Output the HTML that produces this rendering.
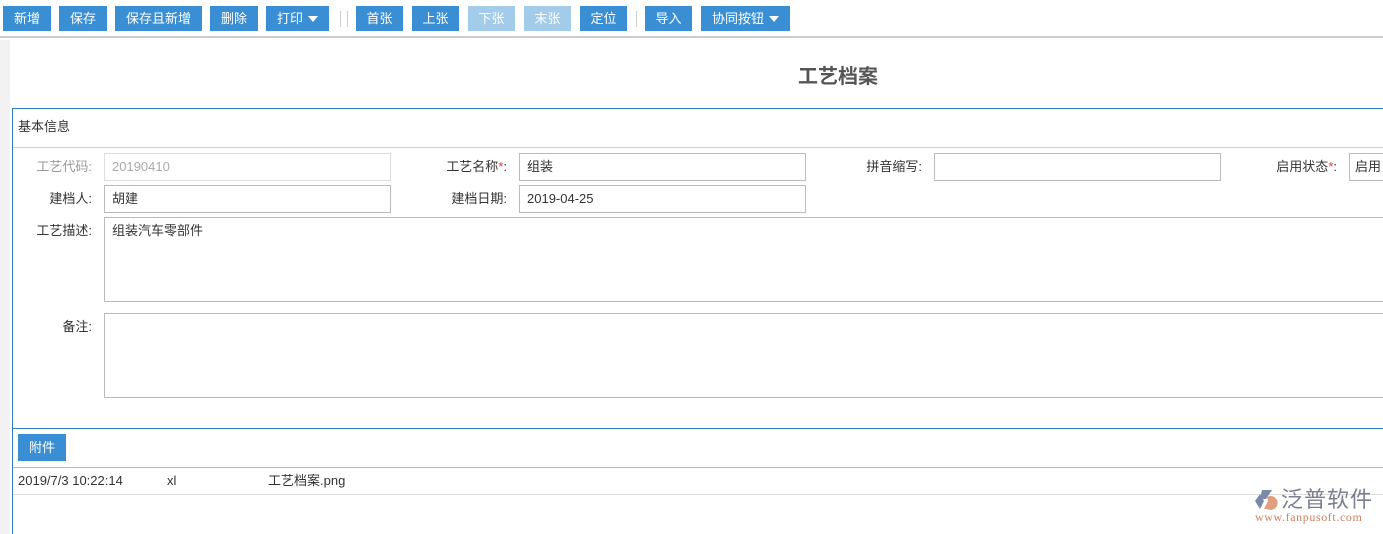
<!DOCTYPE html>
<html><head><meta charset="utf-8"><style>
*{margin:0;padding:0;box-sizing:border-box}
body{width:1383px;height:534px;overflow:hidden;background:#fff;font-family:"Liberation Sans","Noto Sans CJK SC",sans-serif;font-size:13px;line-height:16px;color:#333;position:relative}
.abs{position:absolute}
.btn{position:absolute;top:6px;height:25px;background:#3a8fd4;color:#fff;font-size:13px;line-height:25px;text-align:center}
.dis{background:#a3cbea}
.sep{position:absolute;top:11px;width:1px;height:16px;background:#ccc}
.tri{display:inline-block;width:0;height:0;border-left:5px solid transparent;border-right:5px solid transparent;border-top:6px solid #fff;margin-left:5px;vertical-align:1px}
.lbl{position:absolute;text-align:right;font-size:13px;color:#333;line-height:16px}
.inp{position:absolute;border:1px solid #bbb;height:28px;line-height:26px;padding-left:7px;font-size:13px;background:#fff}
.red{color:#e33}
</style></head><body>
<div class="abs" style="left:0;top:0;width:1383px;height:38px;background:#fff;border-bottom:2px solid #ccc"></div>
<div class="btn" style="left:3px;width:48px">新增</div>
<div class="btn" style="left:59px;width:48px">保存</div>
<div class="btn" style="left:115px;width:87px">保存且新增</div>
<div class="btn" style="left:210px;width:48px">删除</div>
<div class="btn" style="left:266px;width:63px">打印<span class="tri"></span></div>
<div class="sep" style="left:340px"></div><div class="sep" style="left:347px"></div>
<div class="btn" style="left:356px;width:47px">首张</div>
<div class="btn" style="left:412px;width:47px">上张</div>
<div class="btn dis" style="left:468px;width:47px">下张</div>
<div class="btn dis" style="left:524px;width:47px">末张</div>
<div class="btn" style="left:580px;width:47px">定位</div>
<div class="sep" style="left:636px"></div>
<div class="btn" style="left:645px;width:47px">导入</div>
<div class="btn" style="left:701px;width:89px">协同按钮<span class="tri"></span></div>
<div class="abs" style="left:0;top:40px;width:10px;height:494px;background:#f2f2f2"></div>
<div class="abs" style="left:0;top:64px;width:1676px;text-align:center;font-size:20px;line-height:26px;font-weight:bold;color:#555">工艺档案</div>
<div class="abs" style="left:12px;top:108px;width:1371px;height:426px;border-left:1px solid #2e7dc2;border-top:1px solid #2e7dc2"></div>
<div class="abs" style="left:18px;top:119px">基本信息</div>
<div class="abs" style="left:13px;top:147px;width:1370px;height:1px;background:#ccc"></div>
<div class="lbl" style="left:20px;top:159px;width:72px;color:#999">工艺代码:</div>
<div class="inp" style="left:104px;top:153px;width:287px;color:#aaa;border-color:#ddd">20190410</div>
<div class="lbl" style="left:420px;top:159px;width:87px">工艺名称<span class="red">*</span>:</div>
<div class="inp" style="left:519px;top:153px;width:287px">组装</div>
<div class="lbl" style="left:840px;top:159px;width:82px">拼音缩写:</div>
<div class="inp" style="left:934px;top:153px;width:287px"></div>
<div class="lbl" style="left:1250px;top:159px;width:87px">启用状态<span class="red">*</span>:</div>
<div class="inp" style="left:1349px;top:153px;width:60px;padding-left:5px">启用</div>
<div class="lbl" style="left:20px;top:191px;width:72px">建档人:</div>
<div class="inp" style="left:104px;top:185px;width:287px">胡建</div>
<div class="lbl" style="left:420px;top:191px;width:87px">建档日期:</div>
<div class="inp" style="left:519px;top:185px;width:287px">2019-04-25</div>
<div class="lbl" style="left:20px;top:223px;width:72px">工艺描述:</div>
<div class="inp" style="left:104px;top:217px;width:1290px;height:85px;line-height:26px">组装汽车零部件</div>
<div class="lbl" style="left:20px;top:319px;width:72px">备注:</div>
<div class="inp" style="left:104px;top:313px;width:1290px;height:85px"></div>
<div class="abs" style="left:13px;top:428px;width:1370px;height:1px;background:#2e7dc2"></div>
<div class="btn" style="left:18px;top:434px;width:48px;height:27px;line-height:27px">附件</div>
<div class="abs" style="left:13px;top:467px;width:1370px;height:1px;background:#bbb"></div>
<div class="abs" style="left:18px;top:473px">2019/7/3 10:22:14</div>
<div class="abs" style="left:167px;top:473px">xl</div>
<div class="abs" style="left:268px;top:473px">工艺档案.png</div>
<div class="abs" style="left:13px;top:494px;width:1370px;height:1px;background:#ddd"></div>
<svg class="abs" style="left:1253px;top:489px" width="26" height="22" viewBox="0 0 26 22"><path d="M9 1h10l-6 9H7z" fill="#7a8aa8"/><path d="M2 12l5-7 4 7-4 8z" fill="#7a8aa8"/><path d="M14 8a7 7 0 1 1 0 12h-3l4-8z" fill="#e0a080"/></svg>
<div class="abs" style="left:1281px;top:485px;font-size:22px;color:#7a8090;letter-spacing:1px;font-family:'Noto Sans CJK SC',sans-serif;line-height:26px">泛普软件</div>
<div class="abs" style="left:1255px;top:511px;font-size:12px;line-height:13px;color:#d08060;font-family:'Liberation Serif',serif;letter-spacing:0.6px">www.fanpusoft.com</div>
</body></html>
